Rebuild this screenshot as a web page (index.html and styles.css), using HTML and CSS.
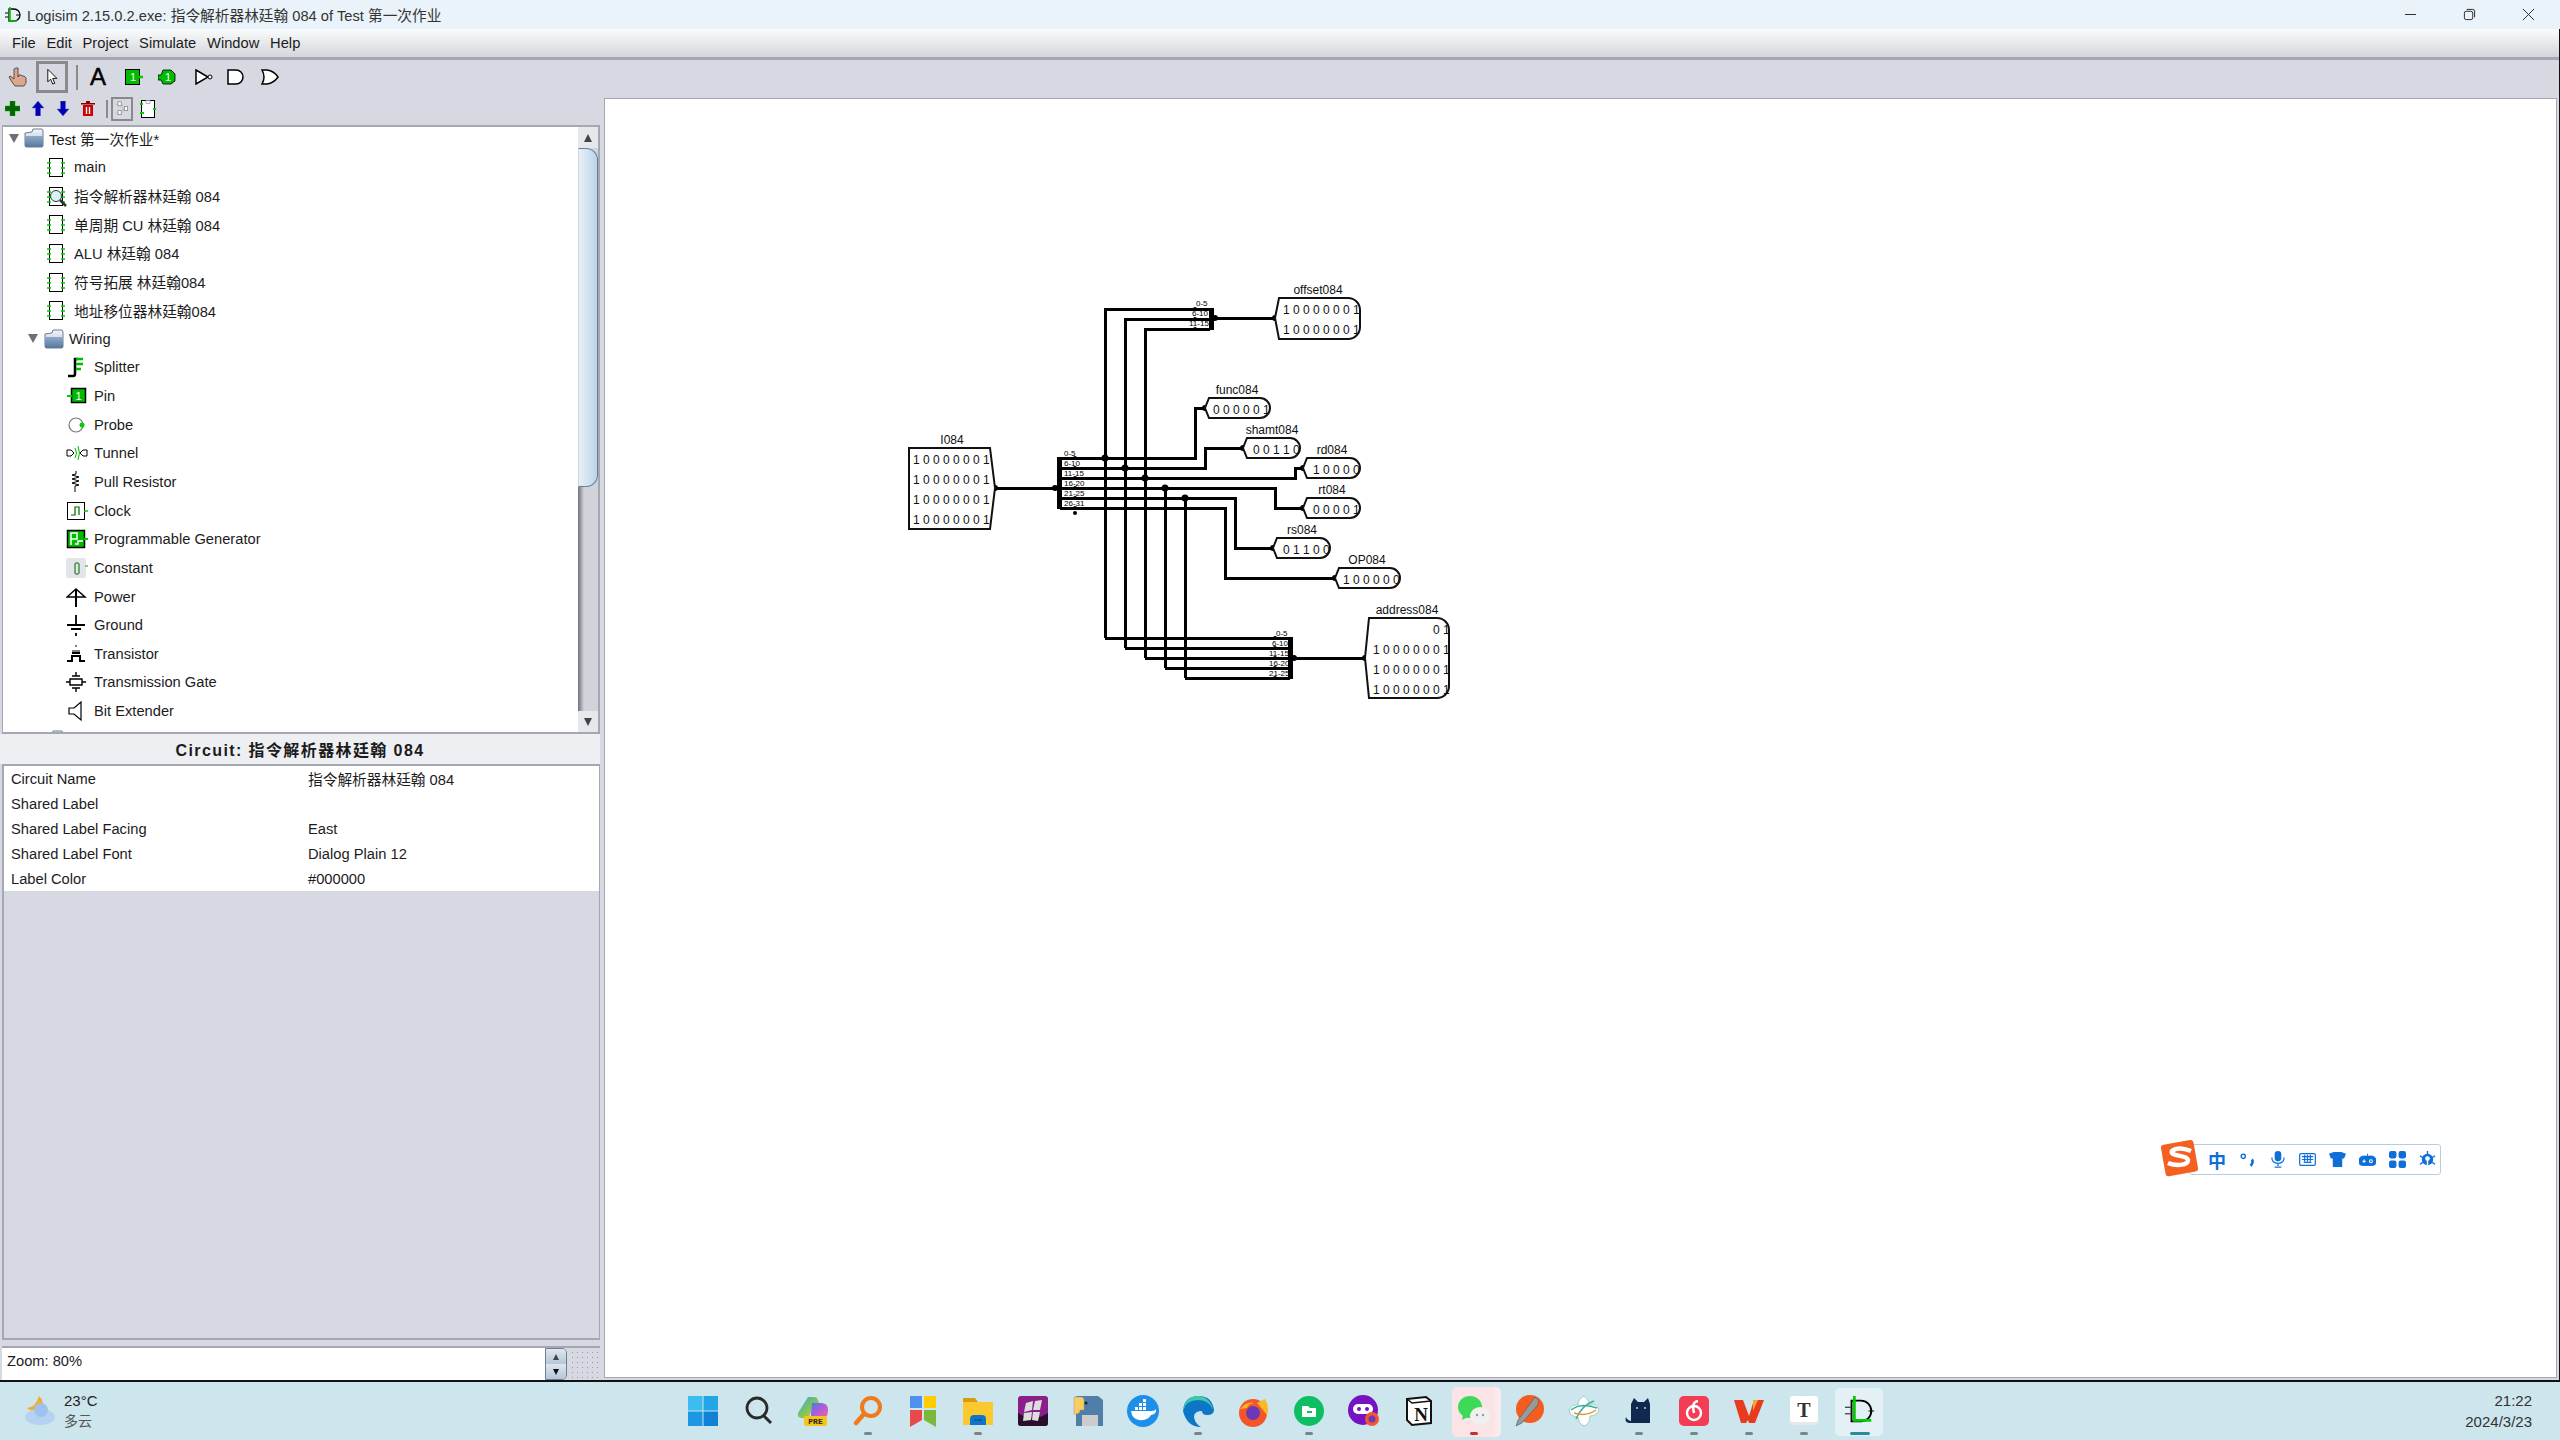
FILE: index.html
```html
<!DOCTYPE html>
<html lang="en">
<head>
    <meta charset="UTF-8">
    <title>Logisim 2.15.0.2.exe</title>
    <link rel="stylesheet" href="styles.css">
</head>
<body>
<svg class="defs">
    <symbol id="sub" viewBox="0 0 22 22">
        <rect x="3.5" y="2.5" width="13" height="18" fill="#fff" stroke="#000"/>
        <path d="M1 7h4M1 12h4M1 17h4M15 7h4M15 12h4M15 17h4" stroke="#0c0" stroke-width="1.5"/>
    </symbol>
    <symbol id="cheese" viewBox="0 0 20 20">
        <path d="M1 5l7-1 1-3h9l1 2v15l-1 1H2l-1-1z" fill="url(#fold)" stroke="#6d7f92"/>
        <path d="M1 8h18v10l-1 1H2l-1-1z" fill="url(#front)"/>
    </symbol>
    <linearGradient id="fold" x1="0" y1="0" x2="0" y2="1">
        <stop offset="0" stop-color="#f2f5f9"/><stop offset="1" stop-color="#a9bdd4"/>
    </linearGradient>
    <linearGradient id="front" x1="0" y1="0" x2="0" y2="1">
        <stop offset="0" stop-color="#8fa9c8"/><stop offset="1" stop-color="#56799f"/>
    </linearGradient>
    <linearGradient id="copi" x1="0" y1="0" x2="1" y2="1">
        <stop offset="0" stop-color="#38a3e8"/><stop offset=".5" stop-color="#7cc65a"/><stop offset="1" stop-color="#f0c040"/>
    </linearGradient>
    <linearGradient id="copi2" x1="0" y1="0" x2="1" y2="1">
        <stop offset="0" stop-color="#3f7fe8"/><stop offset=".5" stop-color="#b05cd8"/><stop offset="1" stop-color="#ee6aa0"/>
    </linearGradient>
</svg>

<div class="titlebar">
    <svg class="app-icon" viewBox="0 0 18 18"><path d="M1 7h3M1 11h3M12 9h4" stroke="#000"/><path d="M5 3h5a6 6 0 0 1 0 12H5z" fill="none" stroke="#000" stroke-width="1.3"/><path d="M6 1v14h7" fill="none" stroke="#0c0" stroke-width="1.6"/></svg>
    <span class="title">Logisim 2.15.0.2.exe: 指令解析器林廷翰 084 of Test 第一次作业</span>
    <div class="winbtns">
        <svg viewBox="0 0 14 14"><path d="M1 7h12" stroke="#222"/></svg>
        <svg viewBox="0 0 14 14"><rect x="1.5" y="3.5" width="9" height="9" rx="2" fill="none" stroke="#222"/><path d="M4 1.5h6.5a2 2 0 0 1 2 2V10" fill="none" stroke="#222"/></svg>
        <svg viewBox="0 0 14 14"><path d="M1 1l12 12M13 1L1 13" stroke="#222"/></svg>
    </div>
</div>

<div class="app">
    <div class="menubar">
        <span>File</span><span>Edit</span><span>Project</span><span>Simulate</span><span>Window</span><span>Help</span>
    </div>

    <div class="toolbar">
        <svg class="t-hand" viewBox="0 0 20 20"><path d="M8 1h2v9l1-2h2l1 1h2l2 2v5l-2 3H7L4 15 1 10l1-1 4 3V2z" fill="#dca78c" stroke="#333" stroke-width=".8"/></svg>
        <div class="t-sel"><svg viewBox="0 0 20 24"><path d="M4 1v18l4-4 3 7 3-1-3-7h6z" fill="#fff" stroke="#000" stroke-width="1.3"/></svg></div>
        <div class="t-sep"></div>
        <span class="t-text">A</span>
        <svg class="t-pin" viewBox="0 0 18 16"><rect x=".5" y=".5" width="14" height="15" fill="#0b0" stroke="#000"/><path d="M14 8h4" stroke="#0c0" stroke-width="2.5"/><text x="8" y="12" text-anchor="middle" class="t-one">1</text></svg>
        <svg class="t-pout" viewBox="0 0 18 16"><path d="M5 1h8l4 4v7l-4 3H5l-2-4H0V6h3z" fill="#0b0" stroke="#000" stroke-width=".8"/><text x="10" y="12" text-anchor="middle" class="t-one">1</text></svg>
        <svg class="t-not" viewBox="0 0 18 16"><path d="M1 1l12 7-12 7z" fill="#fff" stroke="#000" stroke-width="1.5"/><circle cx="15" cy="8" r="2" fill="#fff" stroke="#000"/></svg>
        <svg class="t-and" viewBox="0 0 18 16"><path d="M1 1h8a7 7 0 0 1 0 14H1z" fill="#fff" stroke="#000" stroke-width="1.5"/></svg>
        <svg class="t-or" viewBox="0 0 18 16"><path d="M1 1h5q7 1 11 7-4 6-11 7H1q4-7 0-14z" fill="#fff" stroke="#000" stroke-width="1.5"/></svg>
    </div>

    <div class="main">
        <div class="left">
            <div class="projbar">
                <svg class="p-add" viewBox="0 0 15 15"><path d="M5 0h5v5h5v5h-5v5H5v-5H0V5h5z" fill="#060" stroke="#292"  stroke-width=".5"/></svg>
                <svg class="p-up" viewBox="0 0 14 15"><path d="M7 0l6 7H9.500v8h-5V7H1z" fill="#00b" stroke="#66a" stroke-width=".5"/></svg>
                <svg class="p-dn" viewBox="0 0 14 15"><path d="M7 15l6-7H9.500V0h-5v8H1z" fill="#00b" stroke="#66a" stroke-width=".5"/></svg>
                <svg class="p-del" viewBox="0 0 14 15"><path d="M0 2h14v1.500H0zM5 0h4v2H5z" fill="#800"/><path d="M2 4h10v11H2z" fill="#c00"/><path d="M5.500 6v7M8.500 6v7" stroke="#fff" stroke-width="1.4"/></svg>
                <div class="p-sep"></div>
                <div class="p-tree"><svg viewBox="0 0 20 20"><path d="M2 4h4M2 15h4M9 4q2 0 2 3v3h1M9 15q2 0 2-3v-2h1" stroke="#9c9" fill="none"/><rect x="5" y="1" width="4" height="5" fill="#fff" stroke="#888"/><rect x="5" y="12" width="4" height="5" fill="#fff" stroke="#888"/><rect x="13" y="7" width="4" height="5" fill="#fff" stroke="#888"/></svg></div>
                <svg class="p-lay" viewBox="0 0 16 18"><rect x="1.500" y=".5" width="13" height="17" fill="#fff" stroke="#000"/><path d="M0 4h3M0 13h4M13 9h3" stroke="#0c0" stroke-width="2"/><rect x="6" y=".5" width="4" height="3" fill="#fff" stroke="#888" stroke-width=".6"/></svg>
            </div>

            <div class="explorer">
                <div class="tree">
                    <div class="row d0"><i class="tri"></i><svg class="folder" viewBox="0 0 20 20"><use href="#cheese"/></svg><span>Test 第一次作业*</span></div>
                    <div class="row d1"><svg class="ico"><use href="#sub"/></svg><span>main</span></div>
                    <div class="row d1"><svg class="ico" viewBox="0 0 22 22"><use href="#sub" width="22" height="22"/><circle cx="10" cy="11" r="5.500" fill="#d7f3f5" stroke="#333"/><path d="M14 15l6 6" stroke="#333" stroke-width="2.500"/></svg><span>指令解析器林廷翰 084</span></div>
                    <div class="row d1"><svg class="ico"><use href="#sub"/></svg><span>单周期 CU 林廷翰 084</span></div>
                    <div class="row d1"><svg class="ico"><use href="#sub"/></svg><span>ALU 林廷翰 084</span></div>
                    <div class="row d1"><svg class="ico"><use href="#sub"/></svg><span>符号拓展 林廷翰084</span></div>
                    <div class="row d1"><svg class="ico"><use href="#sub"/></svg><span>地址移位器林廷翰084</span></div>
                    <div class="row d1f"><i class="tri"></i><svg class="folder" viewBox="0 0 20 20"><use href="#cheese"/></svg><span>Wiring</span></div>
                    <div class="row d2"><svg class="ico" viewBox="0 0 22 22"><path d="M2 20h5q2 0 2-2V3h3" fill="none" stroke="#000" stroke-width="2.500"/><path d="M10 3h7M10 8h7M10 13h5" stroke="#0b0" stroke-width="2.500"/></svg><span>Splitter</span></div>
                    <div class="row d2"><svg class="ico" viewBox="0 0 22 22"><rect x="5.500" y="3.500" width="14" height="14" fill="#0b0" stroke="#000" stroke-width="1.500"/><path d="M1 11h5" stroke="#0c0" stroke-width="2"/><text x="12.500" y="15" text-anchor="middle" class="t-one">1</text></svg><span>Pin</span></div>
                    <div class="row d2"><svg class="ico" viewBox="0 0 22 22"><circle cx="10" cy="11" r="7" fill="#fff" stroke="#777" stroke-width="1.200"/><circle cx="16" cy="11" r="2.500" fill="#0c0"/></svg><span>Probe</span></div>
                    <div class="row d2"><svg class="ico" viewBox="0 0 22 22"><path d="M1 8h4l3 3-3 3H1zM21 8h-4l-3 3 3 3h4z" fill="#fff" stroke="#000"/><path d="M9 6q3 5 0 10M12 4q3 7 0 14" fill="none" stroke="#0b0"/></svg><span>Tunnel</span></div>
                    <div class="row d2"><svg class="ico" viewBox="0 0 22 22"><path d="M10 0v3l-4 1 7 2-7 2 7 2-7 2 7 2-4 1v6" fill="none" stroke="#000"/></svg><span>Pull Resistor</span></div>
                    <div class="row d2"><svg class="ico" viewBox="0 0 22 22"><rect x="1.500" y="2.500" width="17" height="17" fill="#fff" stroke="#000"/><path d="M5 15h4V7h4v8" fill="none" stroke="#060" stroke-width="1.200"/><path d="M18 11h4" stroke="#0c0" stroke-width="1.500"/></svg><span>Clock</span></div>
                    <div class="row d2"><svg class="ico" viewBox="0 0 22 22"><rect x="1.500" y="2.500" width="17" height="17" fill="#0b0" stroke="#000" stroke-width="1.500"/><path d="M5 17V5h6v6H5M9 16h3v-3h5" fill="none" stroke="#fff" stroke-width="1.500"/><path d="M18 11h4" stroke="#0c0" stroke-width="2"/></svg><span>Programmable Generator</span></div>
                    <div class="row d2"><svg class="ico" viewBox="0 0 22 22"><rect x="0" y="1" width="20" height="20" rx="2" fill="#e4e5e8"/><rect x="9" y="6" width="4" height="11" rx="1" fill="none" stroke="#060"/><path d="M19 9h3" stroke="#0a0"/></svg><span>Constant</span></div>
                    <div class="row d2"><svg class="ico" viewBox="0 0 22 22"><path d="M10 3l9 8H1z" fill="none" stroke="#000" stroke-width="1.500"/><path d="M10 3v18" stroke="#000" stroke-width="2"/></svg><span>Power</span></div>
                    <div class="row d2"><svg class="ico" viewBox="0 0 22 22"><path d="M10 1v10M1 11h18M5 15h10M10 19v3" stroke="#000" stroke-width="1.800"/></svg><span>Ground</span></div>
                    <div class="row d2"><svg class="ico" viewBox="0 0 22 22"><path d="M6 8h8M10 2v2" stroke="#000"/><path d="M1 18h5v-5h8v5h5M6 10h8" fill="none" stroke="#000" stroke-width="2"/></svg><span>Transistor</span></div>
                    <div class="row d2"><svg class="ico" viewBox="0 0 22 22"><path d="M4 8h12v6H4zM6 5h8M10 1v4M6 17h8M10 17v4M0 11h4M16 11h4" fill="none" stroke="#000" stroke-width="1.400"/></svg><span>Transmission Gate</span></div>
                    <div class="row d2"><svg class="ico" viewBox="0 0 22 22"><path d="M3 8h5l7-6v18l-7-6H3z" fill="#fff" stroke="#000" stroke-width="1.200"/></svg><span>Bit Extender</span></div>
                    <div class="row d2 nextup"><svg class="folder" viewBox="0 0 20 20"><use href="#cheese"/></svg></div>
                </div>
                <div class="vscroll">
                    <div class="sbtn"><i class="up"></i></div>
                    <div class="thumb"></div>
                    <div class="track"></div>
                    <div class="sbtn"><i class="down"></i></div>
                </div>
            </div>

            <div class="props-head">Circuit: 指令解析器林廷翰 084</div>
            <div class="props">
                <div class="props-rows">
                    <div class="prop"><span>Circuit Name</span><span>指令解析器林廷翰 084</span></div>
                    <div class="prop"><span>Shared Label</span><span></span></div>
                    <div class="prop"><span>Shared Label Facing</span><span>East</span></div>
                    <div class="prop"><span>Shared Label Font</span><span>Dialog Plain 12</span></div>
                    <div class="prop"><span>Label Color</span><span>#000000</span></div>
                </div>
            </div>

            <div class="zoombar">
                <div class="zoombox">Zoom: 80%</div>
                <div class="spin"><div><i class="up"></i></div><div><i class="down"></i></div></div>
                <div class="grip"></div>
            </div>
        </div>

        <div class="canvas">
            <svg class="circuit" viewBox="605 99 1950 1279">
                <path class="wire" d="M995 488H1058M1060 458H1195V408H1205M1060 468H1205V448H1243M1060 478H1295V468H1303M1060 488H1275V508H1303M1060 498H1235V548H1273M1060 508H1225V578H1335
                    M1105 638V309H1210M1125 648V319H1210M1145 658V329H1210M1165 488V668M1185 498V678
                    M1105 638H1290M1125 648H1290M1145 658H1290M1165 668H1290M1185 678H1290
                    M1210 318H1275M1290 658H1365"/>
                <path class="bar" d="M1059 457V509M1290 637V679M1211 308V330"/>

                <!-- splitter labels -->
                <rect class="lbl" x="1063" y="461" width="15" height="6"/><rect class="lbl" x="1063" y="471" width="18" height="6"/><rect class="lbl" x="1063" y="481" width="18" height="6"/><rect class="lbl" x="1063" y="491" width="18" height="6"/><rect class="lbl" x="1063" y="501" width="18" height="6"/>
                <text class="split" x="1064" y="456">0-5</text><text class="split" x="1064" y="466">6-10</text><text class="split" x="1064" y="476">11-15</text><text class="split" x="1064" y="486">16-20</text><text class="split" x="1064" y="496">21-25</text><text class="split" x="1064" y="506">26-31</text>
                <rect class="lbl" x="1194" y="311" width="14" height="6"/><rect class="lbl" x="1190" y="321" width="18" height="6"/>
                <text class="split" x="1196" y="306">0-5</text><text class="split" x="1192" y="316">6-10</text><text class="split" x="1189" y="326">11-15</text>
                <rect class="lbl" x="1272" y="641" width="16" height="6"/><rect class="lbl" x="1269" y="651" width="19" height="6"/><rect class="lbl" x="1269" y="661" width="19" height="6"/><rect class="lbl" x="1269" y="671" width="19" height="6"/>
                <text class="split" x="1276" y="636">0-5</text><text class="split" x="1272" y="646">6-10</text><text class="split" x="1269" y="656">11-15</text><text class="split" x="1269" y="666">16-20</text><text class="split" x="1269" y="676">21-25</text>

                <!-- junctions -->
                <g class="dots">
                    <circle cx="1105" cy="458" r="3.500"/><circle cx="1125" cy="468" r="3.500"/><circle cx="1145" cy="478" r="3.500"/><circle cx="1165" cy="488" r="3.500"/><circle cx="1185" cy="498" r="3.500"/>
                    <circle cx="995" cy="488" r="3"/><circle cx="1055" cy="488" r="3"/><circle cx="1215" cy="318" r="3"/><circle cx="1275" cy="318" r="3"/><circle cx="1294" cy="658" r="3"/><circle cx="1365" cy="658" r="3"/>
                    <circle cx="1205" cy="408" r="3"/><circle cx="1243" cy="448" r="3"/><circle cx="1303" cy="468" r="3"/><circle cx="1303" cy="508" r="3"/><circle cx="1273" cy="548" r="3"/><circle cx="1335" cy="578" r="3"/>
                    <circle cx="1075" cy="458" r="2"/><circle cx="1075" cy="468" r="2"/><circle cx="1075" cy="478" r="2"/><circle cx="1075" cy="488" r="2"/><circle cx="1075" cy="498" r="2"/><circle cx="1075" cy="508" r="2"/><circle cx="1075" cy="513" r="2"/>
                    <circle cx="1195" cy="309" r="2"/><circle cx="1195" cy="319" r="2"/><circle cx="1195" cy="329" r="2"/>
                    <circle cx="1275" cy="638" r="2"/><circle cx="1275" cy="648" r="2"/><circle cx="1275" cy="658" r="2"/><circle cx="1275" cy="668" r="2"/><circle cx="1275" cy="678" r="2"/>
                </g>

                <!-- pins -->
                <path class="pin" d="M909 448H990L995 488L990 529H909Z"/>
                <path class="pin" d="M1279 298H1348A12 12 0 0 1 1360 310V327A12 12 0 0 1 1348 339H1279L1275 318Z"/>
                <path class="pin" d="M1209 398H1260A10 10 0 0 1 1260 418H1209L1205 408Z"/>
                <path class="pin" d="M1247 438H1290A10 10 0 0 1 1290 458H1247L1243 448Z"/>
                <path class="pin" d="M1307 458H1350A10 10 0 0 1 1350 478H1307L1303 468Z"/>
                <path class="pin" d="M1307 498H1350A10 10 0 0 1 1350 518H1307L1303 508Z"/>
                <path class="pin" d="M1277 538H1320A10 10 0 0 1 1320 558H1277L1273 548Z"/>
                <path class="pin" d="M1339 568H1390A10 10 0 0 1 1390 588H1339L1335 578Z"/>
                <path class="pin" d="M1369 618H1437A12 12 0 0 1 1449 630V686A12 12 0 0 1 1437 698H1369L1365 658Z"/>

                <text class="name" x="952" y="444">I084</text>
                <text class="val" x="913" y="464">1 0 0 0 0 0 0 1</text><text class="val" x="913" y="484">1 0 0 0 0 0 0 1</text><text class="val" x="913" y="504">1 0 0 0 0 0 0 1</text><text class="val" x="913" y="524">1 0 0 0 0 0 0 1</text>
                <text class="name" x="1318" y="294">offset084</text>
                <text class="val" x="1283" y="314">1 0 0 0 0 0 0 1</text><text class="val" x="1283" y="334">1 0 0 0 0 0 0 1</text>
                <text class="name" x="1237" y="394">func084</text><text class="val" x="1213" y="414">0 0 0 0 0 1</text>
                <text class="name" x="1272" y="434">shamt084</text><text class="val" x="1253" y="454">0 0 1 1 0</text>
                <text class="name" x="1332" y="454">rd084</text><text class="val" x="1313" y="474">1 0 0 0 0</text>
                <text class="name" x="1332" y="494">rt084</text><text class="val" x="1313" y="514">0 0 0 0 1</text>
                <text class="name" x="1302" y="534">rs084</text><text class="val" x="1283" y="554">0 1 1 0 0</text>
                <text class="name" x="1367" y="564">OP084</text><text class="val" x="1343" y="584">1 0 0 0 0 0</text>
                <text class="name" x="1407" y="614">address084</text>
                <text class="val" x="1433" y="634">0 1</text><text class="val" x="1373" y="654">1 0 0 0 0 0 0 1</text><text class="val" x="1373" y="674">1 0 0 0 0 0 0 1</text><text class="val" x="1373" y="694">1 0 0 0 0 0 0 1</text>
            </svg>

            <div class="ime">
                <svg class="ime-s" viewBox="0 0 40 38"><rect x="3" y="3" width="33" height="32" rx="3" fill="#f4601f" transform="rotate(-10 20 19)"/><path d="M31 12q-13-5-19 0c-3 5 15 4 16 9 0 6-13 6-20 3" fill="none" stroke="#fff" stroke-width="4.500"/></svg>
                <span class="ime-zh">中</span>
                <svg viewBox="0 0 16 16"><circle cx="4" cy="5" r="2" fill="none" stroke="#0f6fd8" stroke-width="1.300"/><path d="M12 8q2 2-1 6" fill="none" stroke="#0f6fd8" stroke-width="2.500"/></svg>
                <svg viewBox="0 0 16 18"><rect x="5" y="0" width="7" height="11" rx="3.500" fill="#0f6fd8"/><path d="M2 7q0 6 6.500 6T15 7M8.500 13v3M5 17h7" fill="none" stroke="#0f6fd8" stroke-width="1.300"/></svg>
                <svg viewBox="0 0 18 16"><rect x=".7" y="1.700" width="16.600" height="12.600" rx="1.500" fill="none" stroke="#0f6fd8" stroke-width="1.300"/><path d="M3 5h12M3 8h12M5 11h8M6 3v7M9 3v7M12 3v7" stroke="#0f6fd8" stroke-width="1.300"/></svg>
                <svg viewBox="0 0 18 16"><path d="M5 0h8l5 2-2 5h-2v9H4V7H2L0 2z" fill="#0f6fd8"/></svg>
                <svg viewBox="0 0 20 16"><path d="M5 4h10a5 5 0 0 1 5 6v1a4 4 0 0 1-4 4H4a4 4 0 0 1-4-4v-1a5 5 0 0 1 5-6zM10 1v3" fill="#0f6fd8" stroke="#0f6fd8"/><path d="M4 10h4M6 8v4" stroke="#fff" stroke-width="1.200"/><circle cx="14" cy="10" r="1.700" fill="none" stroke="#fff" stroke-width="1.200"/></svg>
                <svg viewBox="0 0 16 16"><rect x="0" y="0" width="7" height="7" rx="2" fill="#0f6fd8"/><rect x="9" y="0" width="7" height="7" rx="2" fill="#0f6fd8"/><rect x="0" y="9" width="7" height="7" rx="2" fill="#0f6fd8"/><rect x="9" y="9" width="7" height="7" rx="2" fill="#0f6fd8"/></svg>
                <svg viewBox="0 0 18 18"><circle cx="9" cy="9" r="6" fill="#0f6fd8"/><circle cx="9" cy="8" r="2.500" fill="#fff"/><path d="M9 8v7" stroke="#fff" stroke-width="1.500"/><path d="M9 0v4M1 5l3 2M17 5l-3 2M1 14l3-2M17 14l-3-2" stroke="#0f6fd8" stroke-width="1.500"/></svg>
            </div>
        </div>
    </div>
</div>

<div class="taskbar">
    <div class="weather">
        <svg viewBox="0 0 32 32"><path d="M15 1q7 6 1 15-8 1-13-3 9-1 12-12z" fill="#f4ab2e"/><ellipse cx="16" cy="22" rx="15" ry="8" fill="#b6d2f2"/><circle cx="17" cy="15" r="7" fill="#9fc2ec"/></svg>
        <div><div class="temp">23°C</div><div class="sky">多云</div></div>
    </div>

    <div class="apps">
        <div class="app-item"><svg viewBox="0 0 32 32"><rect x="1" y="1" width="14.500" height="14.500" fill="#3cbdf2"/><rect x="16.500" y="1" width="14.500" height="14.500" fill="#24a5e8"/><rect x="1" y="16.500" width="14.500" height="14.500" fill="#1b97e3"/><rect x="16.500" y="16.500" width="14.500" height="14.500" fill="#0f82d8"/></svg></div>
        <div class="app-item search"><svg viewBox="0 0 32 32"><circle cx="14" cy="13" r="10" fill="none" stroke="#2a2a2a" stroke-width="2.800"/><path d="M21 21l7 7" stroke="#2a2a2a" stroke-width="3"/></svg></div>
        <div class="app-item"><svg viewBox="0 0 32 32"><path d="M11 2h6q3 0 4 3l3 8h-9l-3 10H5q-5 0-4-5z" fill="url(#copi)"/><path d="M15 8h9q7 0 7 7 0 8-5 8h-8q-5 0-4-5z" fill="url(#copi2)"/><rect x="7" y="21" width="23" height="10" rx="2" fill="#f5c518"/><text x="18.500" y="29" text-anchor="middle" class="pre">PRE</text></svg></div>
        <div class="app-item on"><svg viewBox="0 0 32 32"><circle cx="19" cy="12" r="9" fill="none" stroke="#f07a1a" stroke-width="4"/><path d="M12 19l-8 9" stroke="#f07a1a" stroke-width="4.500" stroke-linecap="round"/></svg></div>
        <div class="app-item"><svg viewBox="0 0 32 32"><rect x="3" y="1" width="12" height="12" fill="#4d90f0"/><rect x="17" y="1" width="12" height="12" fill="#fc0"/><path d="M3 15h12v10l-12 7z" fill="#e84a4a"/><path d="M17 15h12v17l-12-7z" fill="#7cb83c"/></svg></div>
        <div class="app-item on"><svg viewBox="0 0 32 32"><path d="M1 3h12l3 4H1z" fill="#d99a0c"/><rect x="1" y="7" width="30" height="23" fill="#fbc92e"/><path d="M8 30v-6q0-4 4-4h8q4 0 4 4v6z" fill="#0f75c8"/><path d="M12 25h8" stroke="#043a66"/></svg></div>
        <div class="app-item"><svg viewBox="0 0 32 32"><rect x="1" y="1" width="30" height="30" rx="3" fill="#8a1f8c"/><path d="M1 18q15 10 30 0v10q0 3-3 3H4q-3 0-3-3z" fill="#2a0f2c"/><path d="M9 8l7-2-1 9-8 2zM18 6l7-1-2 10-7 0zM7 18l8-1-1 8-8 1zM16 17l7 0-2 9-6-1z" fill="#ddd"/></svg></div>
        <div class="app-item"><svg viewBox="0 0 32 32"><path d="M4 1h22l5 4v26H4z" fill="#4f7fa8"/><rect x="10" y="20" width="16" height="11" fill="#ccc"/><path d="M2 2h7q3 0 3 3v10H8q0 4-4 4H2z" fill="#f5d060" stroke="#b88" stroke-width=".5"/><circle cx="14" cy="8" r="1.500" fill="#222"/></svg></div>
        <div class="app-item"><svg viewBox="0 0 32 32"><circle cx="16" cy="16" r="16" fill="#1d8fe8"/><path d="M4 16h21q3 0 4-2 1 5-5 6-3 6-12 5-7-1-8-9z" fill="#fff"/><path d="M8 12h3v3H8zM12 12h3v3h-3zM16 12h3v3h-3zM12 8h3v3h-3zM16 8h3v3h-3zM16 4h3v3h-3z" fill="#fff"/></svg></div>
        <div class="app-item on"><svg viewBox="0 0 32 32"><path d="M1 16Q2 1 17 1q13 0 15 14 0 5-7 5-5 0-5-4-7 0-8 5 0 7 7 11Q5 32 1 16z" fill="#0e76c9"/><path d="M1 16Q4 5 16 5q10 0 14 8 2 3-1-4Q24 1 17 1 3 1 1 16z" fill="#3ecba6"/></svg></div>
        <div class="app-item"><svg viewBox="0 0 32 32"><circle cx="16" cy="18" r="14" fill="#f4562a"/><path d="M28 4q5 8 2 16L20 8z" fill="#fbb829"/><circle cx="16" cy="18" r="7" fill="#6a39b8"/><path d="M3 14q7-8 14-6-6 1-7 5z" fill="#ffb12b"/></svg></div>
        <div class="app-item on"><svg viewBox="0 0 32 32"><circle cx="16" cy="16" r="15" fill="#0dbf62"/><path d="M9 11h6l2 2h6v9H9z" fill="#fff"/><path d="M14 17h5" stroke="#0dbf62" stroke-width="2"/></svg></div>
        <div class="app-item"><svg viewBox="0 0 32 32"><circle cx="15" cy="15" r="15" fill="#7512c4"/><rect x="5" y="9" width="20" height="10" rx="5" fill="#fff"/><circle cx="11" cy="14" r="2" fill="#7512c4"/><circle cx="19" cy="14" r="2" fill="#7512c4"/><circle cx="24" cy="24" r="7" fill="#f4562a"/><circle cx="24" cy="24" r="3.500" fill="#6a39b8"/></svg></div>
        <div class="app-item"><svg viewBox="0 0 32 32"><path d="M4 4l19-2 5 4v22l-19 2-5-5z" fill="#fff" stroke="#111" stroke-width="2"/><path d="M4 4l5 4 19-2" fill="none" stroke="#111" stroke-width="1.500"/><text x="18" y="26" text-anchor="middle" class="notion">N</text></svg></div>
        <div class="app-item wechat"><svg viewBox="0 0 32 32"><ellipse cx="12" cy="12" rx="12" ry="11" fill="#3fd95a"/><path d="M5 19l-1 6 6-3z" fill="#3fd95a"/><ellipse cx="22" cy="21" rx="10" ry="9" fill="#f0f0f0"/><circle cx="19" cy="20" r="1.200" fill="#999"/><circle cx="25" cy="20" r="1.200" fill="#999"/></svg></div>
        <div class="app-item"><svg viewBox="0 0 32 32"><circle cx="17" cy="14" r="14" fill="#f45d22"/><path d="M22 2q6 3 2 9L9 28l-6 3 2-6z" fill="#999" stroke="#555" stroke-width=".6"/></svg></div>
        <div class="app-item"><svg viewBox="0 0 32 32"><path d="M16 1q5 4 6 9 7-2 9 5-3 6-9 6 0 8-6 10-6-3-6-9Q2 22 1 15q3-6 9-5 0-6 6-9z" fill="#fff" stroke="#9ccfc6"/><path d="M3 15q10-8 26-2M8 24Q14 10 26 6" fill="none" stroke="#3cae9c" stroke-width="1.500"/><path d="M6 18q12 4 22-3" fill="none" stroke="#e8912c" stroke-width="1.500"/></svg></div>
        <div class="app-item on"><svg viewBox="0 0 32 32"><path d="M8 26V9l3-6 4 4h6l4-4 2 6v19H6q-5-1-3-6 1 3 5 4z" fill="#12294f"/><circle cx="14" cy="13" r="1" fill="#bcd"/><circle cx="22" cy="13" r="1" fill="#bcd"/></svg></div>
        <div class="app-item on"><svg viewBox="0 0 32 32"><rect x="1" y="1" width="30" height="30" rx="5" fill="#f33d54"/><circle cx="16" cy="18" r="7" fill="none" stroke="#fff" stroke-width="2.500"/><path d="M20 6q-7 1-4 12" fill="none" stroke="#fff" stroke-width="2.500"/></svg></div>
        <div class="app-item on"><svg viewBox="0 0 32 32"><path d="M1 5h9l6 16 5-16h10L22 28h-6l-1-3-2 3H8z" fill="#e83a1c"/><path d="M20 5h5l-5 11z" fill="#f5a623"/></svg></div>
        <div class="app-item on"><svg viewBox="0 0 32 32"><rect x="2" y="4" width="28" height="26" rx="3" fill="#e8e8e8"/><rect x="2" y="1" width="28" height="26" rx="3" fill="#fff"/><text x="16" y="22" text-anchor="middle" class="tee">T</text></svg></div>
        <div class="app-item logi"><svg viewBox="0 0 34 34"><path d="M1 13h6M1 20h6M26 17h6" stroke="#000"/><path d="M8 6h10a11 11 0 0 1 0 22H8z" fill="none" stroke="#000" stroke-width="2"/><path d="M11 1v26h18" fill="none" stroke="#0c0" stroke-width="3"/></svg></div>
    </div>

    <div class="clock"><div>21:22</div><div>2024/3/23</div></div>
</div>
</body>
</html>
```

FILE: styles.css
```css
* {
    box-sizing: border-box;
}
html, body {
    margin: 0;
    height: 100%;
}
body {
    width: 2560px;
    height: 1440px;
    overflow: hidden;
    display: flex;
    flex-direction: column;
    font-family: "Liberation Sans", "Noto Sans CJK SC", sans-serif;
    font-size: 14.7px;
    color: #1c1c1c;
    background-color: #d6d9e1;
}
svg {
    display: block;
    flex: none;
}
.defs {
    position: absolute;
    width: 0;
    height: 0;
}

/* window frame */
.titlebar {
    height: 29px;
    flex: none;
    display: flex;
    align-items: center;
    padding-left: 4px;
    background-color: #e9f3f9;
}
.app-icon {
    width: 18px;
    height: 18px;
    margin-right: 5px;
}
.title {
    font-size: 14.7px;
    color: #333;
}
.winbtns {
    margin-left: auto;
    display: flex;
    gap: 46px;
    padding-right: 25px;
}
.winbtns svg {
    width: 13px;
    height: 13px;
}
.app {
    flex: 1;
    min-height: 0;
    display: flex;
    flex-direction: column;
    border-right: 1px solid #111;
}
.menubar {
    height: 31px;
    flex: none;
    display: flex;
    align-items: center;
    gap: 10.8px;
    padding-left: 12px;
    background: linear-gradient(#fbfcfc, #d2d5db);
    border-bottom: 3px solid #a5a8b1;
}
.toolbar {
    height: 37px;
    flex: none;
    padding-bottom: 3px;
    display: flex;
    align-items: center;
}
.t-hand { width: 20px; height: 20px; margin-left: 8px; }
.t-sel {
    width: 32px;
    height: 32px;
    margin-left: 8px;
    padding: 3px 6px;
    border: 3px solid #8a8a8a;
}
.t-sel svg { width: 14px; height: 20px; }
.t-sep {
    width: 2px;
    height: 25px;
    margin-left: 8px;
    background-color: #8a8a8a;
}
.t-text {
    width: 22px;
    margin-left: 9px;
    text-align: center;
    font-size: 24px;
    line-height: 28px;
    color: #000;
    -webkit-text-stroke: .5px #000;
}
.t-pin { width: 18px; height: 16px; margin-left: 16px; }
.t-pout { width: 18px; height: 16px; margin-left: 15px; }
.t-not { width: 18px; height: 16px; margin-left: 19px; }
.t-and { width: 18px; height: 16px; margin-left: 14px; }
.t-or { width: 18px; height: 16px; margin-left: 16px; }
.t-one { font: 11px "Liberation Sans", sans-serif; fill: #fff; }

.main {
    flex: 1;
    min-height: 0;
    display: flex;
}
.left {
    width: 604px;
    flex: none;
    display: flex;
    flex-direction: column;
    padding-right: 4px;
}
.projbar {
    height: 28px;
    flex: none;
    padding-bottom: 5px;
    display: flex;
    align-items: center;
}
.p-add { width: 15px; height: 15px; margin-left: 5px; }
.p-up { width: 14px; height: 15px; margin-left: 11px; }
.p-dn { width: 14px; height: 15px; margin-left: 11px; }
.p-del { width: 14px; height: 15px; margin-left: 11px; }
.p-sep {
    width: 2px;
    height: 18px;
    margin-left: 11px;
    background-color: #8a8a8a;
}
.p-tree {
    width: 22px;
    height: 24px;
    flex: none;
    margin-left: 3px;
    padding: 1px;
    border: 2px solid #8a8a8a;
}
.p-tree svg { width: 16px; height: 18px; }
.p-lay { width: 16px; height: 18px; margin-left: 7px; }

/* explorer */
.explorer {
    height: 609px;
    flex: none;
    display: flex;
    margin-left: 2px;
    background-color: #fff;
    border: 1px solid #a5a8b1;
    border-width: 2px 2px 2px 1px;
    overflow: hidden;
}
.tree {
    flex: 1;
    margin-top: -3px;
    overflow: hidden;
}
.row {
    height: 28.65px;
    display: flex;
    align-items: center;
}
.tri {
    width: 0;
    height: 0;
    border-style: solid;
    border-width: 9px 5px 0 5px;
    border-color: #6c6f76 transparent transparent transparent;
}
.folder {
    width: 20px;
    height: 20px;
}
.d0 { padding-left: 6px; }
.d0 .folder { margin: 0 5px 0 5px; }
.d1 { padding-left: 43px; gap: 6px; }
.d1f { padding-left: 25px; }
.d1f .folder { margin: 0 5px 0 6px; }
.d2 { padding-left: 63px; gap: 6px; }
.nextup { padding-left: 41px; }
.ico {
    width: 22px;
    height: 22px;
}
.vscroll {
    width: 20px;
    flex: none;
    display: flex;
    flex-direction: column;
    background-color: #d0d3da;
}
.sbtn {
    height: 21px;
    flex: none;
    display: flex;
    align-items: center;
    justify-content: center;
    background-color: #e6e8ec;
}
.thumb {
    height: 339px;
    flex: none;
    background: linear-gradient(90deg, #e8f0f7, #bcd5ea);
    border: 1px solid #5f7f9c;
    border-left-color: #d0d3da;
    border-radius: 0 12px 12px 0;
}
.track {
    flex: 1;
    background: linear-gradient(90deg, #6e7078, #d0d3da 30%);
}
.up, .down {
    width: 0;
    height: 0;
    border-style: solid;
    border-width: 0 4px 8px 4px;
    border-color: transparent transparent #444 transparent;
}
.down {
    border-width: 8px 4px 0 4px;
    border-color: #444 transparent transparent transparent;
}

/* attribute table */
.props-head {
    height: 30px;
    flex: none;
    display: flex;
    align-items: center;
    justify-content: center;
    font-size: 16px;
    font-weight: bold;
    letter-spacing: 1.4px;
    background-color: #eeeff2;
}
.props {
    flex: 1;
    margin-left: 2px;
    border: 2px solid #a5a8b1;
    border-right-width: 1px;
}
.props-rows {
    background-color: #fff;
}
.prop {
    height: 25px;
    display: flex;
    align-items: center;
    padding-left: 7px;
}
.prop span:first-child {
    width: 297px;
}
.zoombar {
    height: 34px;
    flex: none;
    margin-top: 6px;
    display: flex;
    margin-left: 2px;
    border-top: 2px solid #a5a8b1;
}
.zoombox {
    width: 543px;
    padding: 5px 0 0 5px;
    background-color: #fff;
}
.spin {
    width: 22px;
    display: flex;
    flex-direction: column;
    border: 1px solid #6d7f92;
    border-radius: 0 5px 5px 0;
    overflow: hidden;
}
.spin div {
    flex: 1;
    display: flex;
    align-items: center;
    justify-content: center;
    background: linear-gradient(#e0e6ee, #b4c6d8);
}
.spin .up { border-width: 0 3px 6px 3px; }
.spin .down { border-width: 6px 3px 0 3px; border-top-color: #111; }
.grip {
    width: 30px;
    margin: 2px 0 0 3px;
    background-image: radial-gradient(#999 .7px, transparent .8px);
    background-size: 5px 5px;
}

/* drawing area */
.canvas {
    flex: 1;
    position: relative;
    margin: 1px 2px 2px 0;
    background-color: #fff;
    border: 1px solid #a5a8b1;
}
.circuit {
    position: absolute;
    left: 0;
    top: 0;
    width: 1950px;
    height: 1279px;
}
.wire {
    fill: none;
    stroke: #000;
    stroke-width: 3;
    shape-rendering: crispEdges;
}
.bar {
    fill: none;
    stroke: #000;
    stroke-width: 5;
    shape-rendering: crispEdges;
}
.lbl { fill: #fff; }
.split {
    font: 8px "Liberation Sans", sans-serif;
    fill: #000;
}
.dots { fill: #000; }
.pin {
    fill: #fff;
    stroke: #111;
    stroke-width: 2;
}
.name {
    font: 12px "Liberation Sans", sans-serif;
    text-anchor: middle;
    fill: #111;
}
.val {
    font: 12px "Liberation Sans", sans-serif;
    fill: #111;
}
.ime {
    position: absolute;
    left: 1584px;
    top: 1045px;
    width: 252px;
    height: 31px;
    display: flex;
    align-items: center;
    gap: 13px;
    padding-left: 18px;
    background-color: #fff;
    border: 1px solid #b8cde2;
    border-radius: 3px;
}
.ime svg {
    width: 17px;
    height: 17px;
}
.ime .ime-s {
    position: absolute;
    left: -30px;
    top: -6px;
    width: 40px;
    height: 38px;
}
.ime-zh {
    font-size: 18px;
    font-weight: bold;
    color: #0f6fd8;
}

/* taskbar */
.taskbar {
    height: 60px;
    flex: none;
    position: relative;
    display: flex;
    align-items: center;
    background-color: #cde5ec;
    border-top: 2px solid #111;
}
.weather {
    display: flex;
    align-items: center;
    gap: 8px;
    padding-left: 24px;
}
.weather svg {
    width: 32px;
    height: 32px;
}
.temp {
    font-size: 15px;
    line-height: 21px;
    color: #222;
}
.sky {
    font-size: 14px;
    line-height: 21px;
    color: #555;
}
.apps {
    position: absolute;
    left: 675px;
    top: 0;
    height: 58px;
    display: flex;
}
.app-item {
    width: 55.1px;
    height: 58px;
    position: relative;
    display: flex;
    align-items: center;
    justify-content: center;
}
.app-item svg {
    width: 32px;
    height: 32px;
}
.app-item.search svg {
    margin-left: 2px;
}
.app-item.on::after,
.wechat::after,
.logi::after {
    content: "";
    position: absolute;
    left: 50%;
    bottom: 5px;
    width: 8px;
    height: 3px;
    margin-left: -4px;
    border-radius: 2px;
    background-color: #7c8488;
}
.wechat::before {
    content: "";
    position: absolute;
    left: 6px;
    top: 5px;
    width: 43px;
    height: 50px;
    border-radius: 5px;
    background-color: #fbe4e6;
    box-shadow: 6px 0 0 #fbeaec;
}
.wechat svg {
    position: relative;
}
.wechat::after {
    background-color: #c9302c;
}
.logi::before {
    content: "";
    position: absolute;
    left: 3px;
    top: 6px;
    width: 48px;
    height: 48px;
    border-radius: 5px;
    background-color: #e3f1f6;
}
.logi svg {
    position: relative;
}
.logi::after {
    width: 20px;
    margin-left: -10px;
    background-color: #2b8a9c;
}
.pre {
    font: bold 8px "Liberation Mono", monospace;
    fill: #222;
}
.notion {
    font: bold 19px "Liberation Serif", serif;
    fill: #111;
}
.tee {
    font: bold 20px "Liberation Serif", serif;
    fill: #333;
}
.clock {
    margin-left: auto;
    padding-right: 28px;
    text-align: right;
    font-size: 15px;
    line-height: 21px;
    color: #333;
}
```
